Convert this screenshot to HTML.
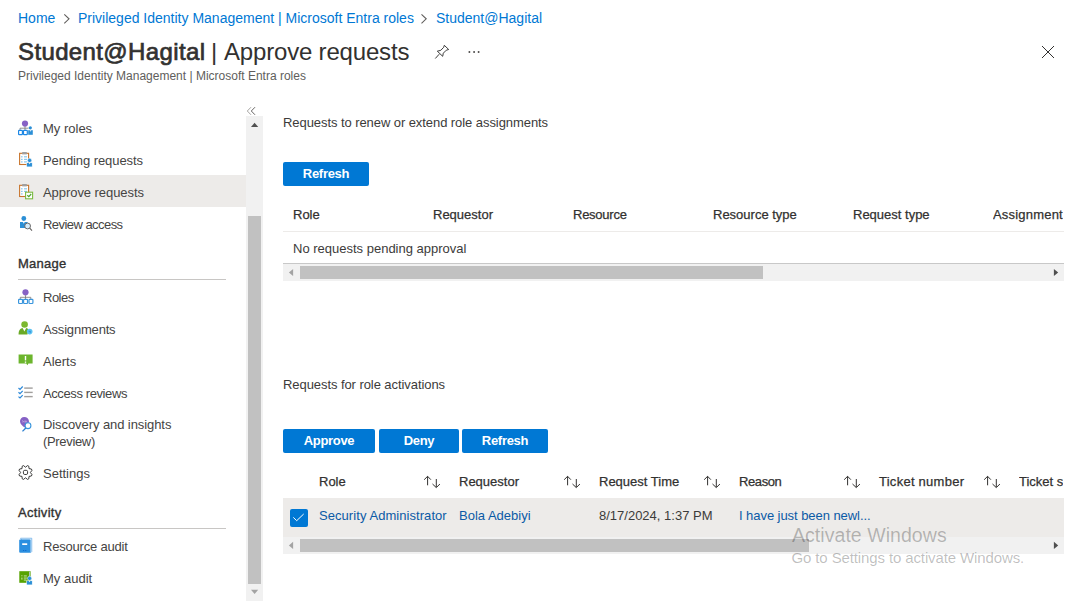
<!DOCTYPE html>
<html><head><meta charset="utf-8">
<style>
*{box-sizing:border-box;margin:0;padding:0}
html,body{width:1083px;height:601px;overflow:hidden;background:#fff;font-family:"Liberation Sans",sans-serif;color:#323130}
.abs{position:absolute;white-space:nowrap}
.bc{font-size:14px;line-height:16px;color:#0078d4;top:10px}
.title{font-size:24px;line-height:28px;color:#323130;top:38px;left:18px}
.sub{font-size:12px;line-height:14px;color:#605e5c;top:69px;left:18px}
.nav{font-size:13px;line-height:15px;color:#454443}
.sel{position:absolute;left:0;top:175px;width:246px;height:32px;background:#edebe9}
.hdr{font-size:13px;line-height:15px;color:#323130;-webkit-text-stroke:0.35px #323130}
.line{position:absolute;height:1px;background:#c8c6c4}
.txt{font-size:13px;line-height:15px;color:#3c3b3a}
.btn{position:absolute;background:#0078d4;color:#fff;font-weight:bold;font-size:13px;text-align:center;border-radius:2px;height:24px;line-height:24px;letter-spacing:-0.3px}
.th{font-size:13px;line-height:15px;color:#323130;-webkit-text-stroke:0.25px #323130}
.lnk{color:#0b5aa6}
.ico{position:absolute;width:24px;height:24px}
.sb{position:absolute;background:#f1f1f1}
.thumb{position:absolute;background:#c1c1c1}
.sort{position:absolute;width:26px;height:20px}
.wm{position:absolute;white-space:nowrap;color:rgba(0,0,0,0.26)}
</style></head><body>
<!-- breadcrumb -->
<div class="abs bc" style="left:18px">Home</div>
<svg class="abs" style="left:56px;top:8px" width="24" height="20"><path d="M8.3 6.3 L13 10.8 L8.3 15.3" fill="none" stroke="#605e5c" stroke-width="1.1"/></svg>
<div class="abs bc" style="left:78px">Privileged Identity Management | Microsoft Entra roles</div>
<svg class="abs" style="left:414px;top:8px" width="24" height="20"><path d="M7.5 6.3 L12.2 10.8 L7.5 15.3" fill="none" stroke="#605e5c" stroke-width="1.1"/></svg>
<div class="abs bc" style="left:436px">Student@Hagital</div>
<!-- title -->
<div class="abs title"><span style="-webkit-text-stroke:0.7px #323130;letter-spacing:0.37px">Student@Hagital</span><span style="position:absolute;left:193px;top:0">|</span><span style="position:absolute;left:206px;top:0;letter-spacing:-0.18px">Approve requests</span></div>
<svg class="abs" style="left:430px;top:40px" width="24" height="24"><g fill="none" stroke="#323130" stroke-width="0.95" stroke-linejoin="round"><path d="M9.2 14.2 L5.3 18.5"/><path d="M14.3 5.3 L18.7 9.5 L16.3 10.2 L13.3 13.2 L12.7 16.3 L7.3 11.2 L10.8 10.3 L13.7 7.3 Z"/></g></svg>
<svg class="abs" style="left:464px;top:46px" width="20" height="12"><g fill="#323130"><rect x="4.6" y="5.2" width="1.6" height="1.6"/><rect x="9.3" y="5.2" width="1.6" height="1.6"/><rect x="13.8" y="5.2" width="1.6" height="1.6"/></g></svg>
<svg class="abs" style="left:1036px;top:40px" width="24" height="24"><path d="M6 6 L18 18 M18 6 L6 18" stroke="#323130" stroke-width="1"/></svg>
<div class="abs sub">Privileged Identity Management | Microsoft Entra roles</div>

<!-- nav -->
<div class="sel"></div>
<!-- collapse chevrons -->
<svg class="abs" style="left:244px;top:104px" width="16" height="14"><g fill="none" stroke-width="0.95"><path d="M7 3.2 L3.3 7 L7 10.8" stroke="#a19f9d"/><path d="M11 3.2 L7.3 7 L11 10.8" stroke="#605e5c"/></g></svg>
<!-- left scrollbar -->
<div class="sb" style="left:246px;top:116px;width:17px;height:485px"></div>
<svg class="abs" style="left:246px;top:116px" width="17" height="17"><path d="M5 11 L12.2 11 L8.6 6.8 Z" fill="#505050"/></svg>
<div class="thumb" style="left:248px;top:216px;width:13px;height:368px"></div>
<svg class="abs" style="left:246px;top:584px" width="17" height="17"><path d="M5 5.8 L12.2 5.8 L8.6 10 Z" fill="#a3a3a3"/></svg>

<!-- My roles icon -->
<svg class="ico" style="left:14px;top:116px" viewBox="0 0 24 24"><circle cx="11" cy="7.6" r="3.1" fill="#8661c5"/><path d="M11 10.5 V12.2 M6 12.2 H14.5 M6 12.2 V14 M11 12.2 V14" stroke="#7a7574" stroke-width="0.8" fill="none"/><rect x="4.6" y="14.3" width="3.8" height="4.3" rx="0.6" fill="none" stroke="#1e88e5" stroke-width="1.2"/><rect x="9.5" y="14.3" width="3.8" height="4.3" rx="0.6" fill="none" stroke="#1e88e5" stroke-width="1.2"/><circle cx="16.3" cy="11.8" r="1.6" fill="#2b8fd6"/><path d="M14.2 14.2 H18.8 V18.8 H14.2 Z" fill="#2b8fd6"/><path d="M15.7 14.2 L17.3 14.2 L16.5 15.8 Z" fill="#fff"/></svg>
<div class="abs nav" style="left:43px;top:121px">My roles</div>

<!-- Pending requests icon -->
<svg class="ico" style="left:14px;top:148px" viewBox="0 0 24 24"><rect x="5.6" y="5.3" width="9" height="11.2" fill="#fff" stroke="#c8742c" stroke-width="1.1"/><rect x="8.2" y="4" width="4.6" height="2.4" fill="#a0a0a0"/><g fill="#8cc8ee"><rect x="7" y="8.2" width="1.6" height="1.2"/><rect x="10" y="8.2" width="3" height="1.2"/><rect x="7" y="10.8" width="1.6" height="1.2"/><rect x="10" y="10.8" width="3" height="1.2"/><rect x="7" y="13.3" width="1.6" height="1.2"/><rect x="10" y="13.3" width="3" height="1.2"/></g><circle cx="15.6" cy="12.4" r="2.1" fill="#2b8fd6" stroke="#fff" stroke-width="0.5"/><rect x="12.6" y="14.8" width="5.6" height="4.1" fill="#2b8fd6" stroke="#fff" stroke-width="0.5"/><path d="M14.8 14.8 L16.4 14.8 L15.6 16.3 Z" fill="#fff"/></svg>
<div class="abs nav" style="left:43px;top:153px;letter-spacing:-0.08px">Pending requests</div>

<!-- Approve requests icon -->
<svg class="ico" style="left:14px;top:180px" viewBox="0 0 24 24"><rect x="5.6" y="5.3" width="9" height="11.2" fill="#fff" stroke="#c8742c" stroke-width="1.1"/><rect x="8.2" y="4" width="4.6" height="2.4" fill="#a0a0a0"/><g fill="#8cc8ee"><rect x="7" y="8.2" width="1.6" height="1.2"/><rect x="10" y="8.2" width="3" height="1.2"/><rect x="7" y="10.8" width="1.6" height="1.2"/><rect x="10" y="10.8" width="3" height="1.2"/><rect x="7" y="13.3" width="1.6" height="1.2"/></g><rect x="11.6" y="12.2" width="7" height="6.6" fill="#fff" stroke="#7cbb42" stroke-width="1.1"/><path d="M13.3 15.3 L14.8 16.6 L17.2 14" fill="none" stroke="#4ea72e" stroke-width="1.2"/></svg>
<div class="abs nav" style="left:43px;top:185px;letter-spacing:-0.06px">Approve requests</div>

<!-- Review access icon -->
<svg class="ico" style="left:14px;top:212px" viewBox="0 0 24 24"><circle cx="9.8" cy="6.5" r="2.4" fill="#2b8fd6"/><path d="M6 10 H13.5 V16 H6 Z" fill="#2b8fd6"/><path d="M8.9 10 L10.7 10 L9.8 11.8 Z" fill="#fff"/><circle cx="13.6" cy="14" r="2.9" fill="#d6ecfb" stroke="#605e5c" stroke-width="0.9"/><path d="M15.7 16.2 L18 18.6" stroke="#605e5c" stroke-width="1.1"/></svg>
<div class="abs nav" style="left:43px;top:217px;letter-spacing:-0.55px">Review access</div>

<div class="abs hdr" style="left:18px;top:256px;letter-spacing:0.25px">Manage</div>
<div class="line" style="left:18px;top:279px;width:208px"></div>

<!-- Roles icon -->
<svg class="ico" style="left:14px;top:285px" viewBox="0 0 24 24"><circle cx="11.5" cy="7.3" r="3.1" fill="#8661c5"/><path d="M11.5 10.3 V14 M6.3 12.3 H16.8 M6.3 12.3 V14 M16.8 12.3 V14" stroke="#7a7574" stroke-width="0.8" fill="none"/><rect x="4.6" y="14.3" width="3.9" height="4.2" rx="0.7" fill="none" stroke="#3a96dd" stroke-width="1.2"/><rect x="9.6" y="14.3" width="3.9" height="4.2" rx="0.7" fill="none" stroke="#3a96dd" stroke-width="1.2"/><rect x="15" y="14.3" width="3.9" height="4.2" rx="0.7" fill="none" stroke="#3a96dd" stroke-width="1.2"/></svg>
<div class="abs nav" style="left:43px;top:290px;letter-spacing:-0.5px">Roles</div>

<!-- Assignments icon -->
<svg class="ico" style="left:14px;top:317px" viewBox="0 0 24 24"><circle cx="10.6" cy="7.5" r="3.3" fill="#7cb82f"/><path d="M4.6 17.4 C4.6 13 6.5 11.4 8.6 11 L10.4 14.5 L12.2 11 C13.2 11.2 13.8 11.6 14.2 12 L13.5 17.4 Z" fill="#6aaa26"/><circle cx="15.7" cy="14.6" r="2.8" fill="#5cc2f2"/><path d="M14.6 14.3 H16.8 M15.6 15.2 H17" stroke="#2b7fd0" stroke-width="0.7"/></svg>
<div class="abs nav" style="left:43px;top:322px;letter-spacing:-0.18px">Assignments</div>

<!-- Alerts icon -->
<svg class="ico" style="left:14px;top:349px" viewBox="0 0 24 24"><path d="M4.6 5.5 H18.6 V14.6 H14.4 L13.4 16.3 L12.2 14.6 H4.6 Z" fill="#6cb52d"/><rect x="10.8" y="7" width="1.4" height="4.4" fill="#fff"/><rect x="10.8" y="12.5" width="1.4" height="1.3" fill="#fff"/></svg>
<div class="abs nav" style="left:43px;top:354px">Alerts</div>

<!-- Access reviews icon -->
<svg class="ico" style="left:14px;top:381px" viewBox="0 0 24 24"><g fill="none" stroke="#2b88d8" stroke-width="1.2"><path d="M4.5 7 L6 8.4 L8.7 5.5"/><path d="M4.5 11.3 L6 12.7 L8.7 9.8"/><path d="M4.5 15.6 L6 17 L8.7 14.1"/></g><g fill="#a19f9d"><rect x="10.2" y="6.4" width="8.5" height="1.4"/><rect x="10.2" y="10.7" width="8.5" height="1.4"/><rect x="10.2" y="14.9" width="8.5" height="1.4"/></g></svg>
<div class="abs nav" style="left:43px;top:386px;letter-spacing:-0.4px">Access reviews</div>

<!-- Discovery icon -->
<svg class="ico" style="left:14px;top:412px" viewBox="0 0 24 24"><path d="M10.2 5 C13 5 15 7 15 9.5 C15 11.5 13.5 12.6 12 13.5 L10.5 15.5 C8.5 14 6 12 6 9.3 C6 7 7.8 5 10.2 5 Z" fill="#8661c5"/><path d="M8.4 8.5 L9.5 9.6 L8.4 10 M11 8.5 V10.5 M12.2 8.8 V10.5" stroke="#e6dcf5" stroke-width="0.6" fill="none"/><circle cx="14" cy="13.7" r="2.9" fill="#fff" stroke="#3a96dd" stroke-width="1.1"/><path d="M11.8 16 L8.5 19.4" stroke="#2b7fd0" stroke-width="1.3"/></svg>
<div class="abs nav" style="left:43px;top:417px;letter-spacing:-0.08px">Discovery and insights</div>
<div class="abs nav" style="left:43px;top:434px;letter-spacing:-0.33px">(Preview)</div>

<!-- Settings icon -->
<svg class="ico" style="left:14px;top:461px" viewBox="0 0 24 24"><path d="M9.5 4.6 L11.5 6.2 L13.5 4.6 L14.8 5.2 L15 7.6 L17.4 8 L18 9.3 L16.4 11.5 L18 13.7 L17.4 15 L15 15.4 L14.8 17.8 L13.5 18.4 L11.5 16.8 L9.5 18.4 L8.2 17.8 L8 15.4 L5.6 15 L5 13.7 L6.6 11.5 L5 9.3 L5.6 8 L8 7.6 L8.2 5.2 Z" fill="none" stroke="#323130" stroke-width="0.95" stroke-linejoin="round"/><rect x="9.4" y="9.3" width="4.2" height="4.2" rx="1.4" fill="none" stroke="#323130" stroke-width="0.95"/></svg>
<div class="abs nav" style="left:43px;top:466px">Settings</div>

<div class="abs hdr" style="left:18px;top:505px;letter-spacing:0.3px">Activity</div>
<div class="line" style="left:18px;top:528px;width:208px"></div>

<!-- Resource audit icon -->
<svg class="ico" style="left:14px;top:534px" viewBox="0 0 24 24"><path d="M6.5 4.2 H17.8 V17.5 L16.5 18.8 Z" fill="#cfe4f7" stroke="#5aa6e6" stroke-width="0.6"/><rect x="5.2" y="5.5" width="11.3" height="13.3" rx="1" fill="#2b8fe0"/><rect x="8.2" y="9.3" width="5" height="1.7" fill="#fff"/><g fill="#0a62c9"><rect x="9.2" y="16" width="1" height="1"/><rect x="11.3" y="16" width="1" height="1"/></g></svg>
<div class="abs nav" style="left:43px;top:539px;letter-spacing:-0.2px">Resource audit</div>

<!-- My audit icon -->
<svg class="ico" style="left:14px;top:566px" viewBox="0 0 24 24"><rect x="5.3" y="5.2" width="11.3" height="11.6" fill="#57a300"/><path d="M15.6 5.6 V11" stroke="#d0d0f0" stroke-width="0.8"/><g fill="#d8ecc2"><rect x="7.4" y="9.3" width="1" height="1"/><rect x="9.8" y="9.5" width="3" height="0.9"/><rect x="7.4" y="11.6" width="1" height="2"/><rect x="9.8" y="11.6" width="3" height="0.9"/><rect x="9.8" y="13.6" width="2.6" height="0.9"/></g><circle cx="15.6" cy="12.4" r="2.1" fill="#2b8fd6" stroke="#fff" stroke-width="0.5"/><rect x="12.6" y="14.8" width="5.6" height="4.1" fill="#2b8fd6" stroke="#fff" stroke-width="0.5"/><path d="M14.8 14.8 L16.4 14.8 L15.6 16.3 Z" fill="#fff"/></svg>
<div class="abs nav" style="left:43px;top:571px">My audit</div>

<!-- main section 1 -->
<div class="abs txt" style="left:283px;top:115px;letter-spacing:-0.07px">Requests to renew or extend role assignments</div>
<div class="btn" style="left:283px;top:162px;width:86px">Refresh</div>
<div class="abs th" style="left:293px;top:207px">Role</div>
<div class="abs th" style="left:433px;top:207px">Requestor</div>
<div class="abs th" style="left:573px;top:207px;letter-spacing:-0.25px">Resource</div>
<div class="abs th" style="left:713px;top:207px">Resource type</div>
<div class="abs th" style="left:853px;top:207px">Request type</div>
<div class="abs th" style="left:993px;top:207px;width:70px;overflow:hidden;letter-spacing:0.2px">Assignment</div>
<div class="line" style="left:283px;top:231px;width:781px;background:#edebe9"></div>
<div class="abs txt" style="left:293px;top:241px">No requests pending approval</div>
<!-- h scrollbar 1 -->
<div class="line" style="left:283px;top:263px;width:781px;background:#c8c8c8"></div>
<div class="sb" style="left:283px;top:264px;width:781px;height:17px"></div>
<svg class="abs" style="left:283px;top:264px" width="17" height="17"><path d="M10.1 4.9 L10.1 12 L5.9 8.45 Z" fill="#a3a3a3"/></svg>
<div class="thumb" style="left:300px;top:266px;width:463px;height:13px"></div>
<svg class="abs" style="left:1047px;top:264px" width="17" height="17"><path d="M6.9 4.9 L6.9 12 L11.2 8.45 Z" fill="#505050"/></svg>

<!-- main section 2 -->
<div class="abs txt" style="left:283px;top:377px;letter-spacing:-0.07px">Requests for role activations</div>
<div class="btn" style="left:283px;top:429px;width:92px">Approve</div>
<div class="btn" style="left:379px;top:429px;width:80px">Deny</div>
<div class="btn" style="left:462px;top:429px;width:86px">Refresh</div>

<div class="abs th" style="left:319px;top:474px">Role</div>
<div class="abs th" style="left:459px;top:474px">Requestor</div>
<div class="abs th" style="left:599px;top:474px">Request Time</div>
<div class="abs th" style="left:739px;top:474px;letter-spacing:-0.4px">Reason</div>
<div class="abs th" style="left:879px;top:474px;letter-spacing:0.26px">Ticket number</div>
<div class="abs th" style="left:1019px;top:474px;width:44px;overflow:hidden">Ticket status</div>
<svg class="sort" style="left:420px;top:472px" viewBox="0 0 26 20"><g fill="none" stroke="#323130" stroke-width="1"><path d="M7.6 4.3 V13.3 M4.2 7.7 L7.6 4.3 L10.9 7.7"/><path d="M16.3 7 V15.3 M12.5 12 L16.3 15.6 L19.9 12"/></g></svg>
<svg class="sort" style="left:560px;top:472px" viewBox="0 0 26 20"><g fill="none" stroke="#323130" stroke-width="1"><path d="M7.6 4.3 V13.3 M4.2 7.7 L7.6 4.3 L10.9 7.7"/><path d="M16.3 7 V15.3 M12.5 12 L16.3 15.6 L19.9 12"/></g></svg>
<svg class="sort" style="left:700px;top:472px" viewBox="0 0 26 20"><g fill="none" stroke="#323130" stroke-width="1"><path d="M7.6 4.3 V13.3 M4.2 7.7 L7.6 4.3 L10.9 7.7"/><path d="M16.3 7 V15.3 M12.5 12 L16.3 15.6 L19.9 12"/></g></svg>
<svg class="sort" style="left:840px;top:472px" viewBox="0 0 26 20"><g fill="none" stroke="#323130" stroke-width="1"><path d="M7.6 4.3 V13.3 M4.2 7.7 L7.6 4.3 L10.9 7.7"/><path d="M16.3 7 V15.3 M12.5 12 L16.3 15.6 L19.9 12"/></g></svg>
<svg class="sort" style="left:980px;top:472px" viewBox="0 0 26 20"><g fill="none" stroke="#323130" stroke-width="1"><path d="M7.6 4.3 V13.3 M4.2 7.7 L7.6 4.3 L10.9 7.7"/><path d="M16.3 7 V15.3 M12.5 12 L16.3 15.6 L19.9 12"/></g></svg>

<!-- row -->
<div style="position:absolute;left:283px;top:498px;width:781px;height:39px;background:#edebe9"></div>
<svg class="abs" style="left:290px;top:509px" width="18" height="18"><rect x="0" y="0" width="18" height="18" rx="2" fill="#0078d4"/><path d="M3.3 8.4 L6.7 11.7 L13.7 5" fill="none" stroke="#fff" stroke-width="1"/></svg>
<div class="abs txt lnk" style="left:319px;top:508px;letter-spacing:0.06px">Security Administrator</div>
<div class="abs txt lnk" style="left:459px;top:508px">Bola Adebiyi</div>
<div class="abs txt" style="left:599px;top:508px">8/17/2024, 1:37 PM</div>
<div class="abs txt lnk" style="left:739px;top:508px;letter-spacing:-0.06px">I have just been newl...</div>

<!-- h scrollbar 2 -->
<div class="sb" style="left:283px;top:537px;width:781px;height:17px"></div>
<svg class="abs" style="left:283px;top:537px" width="17" height="17"><path d="M10.1 4.8 L10.1 12 L5.9 8.4 Z" fill="#a3a3a3"/></svg>
<div class="thumb" style="left:300px;top:539px;width:509px;height:13px"></div>
<svg class="abs" style="left:1047px;top:537px" width="17" height="17"><path d="M6.9 4.8 L6.9 12 L11.2 8.4 Z" fill="#505050"/></svg>

<!-- watermark -->
<div class="wm" style="left:792px;top:524px;font-size:19.5px;line-height:22px;letter-spacing:0.05px">Activate Windows</div>
<div class="wm" style="left:791.5px;top:549px;font-size:15px;line-height:17px;letter-spacing:-0.12px">Go to Settings to activate Windows.</div>
</body></html>
